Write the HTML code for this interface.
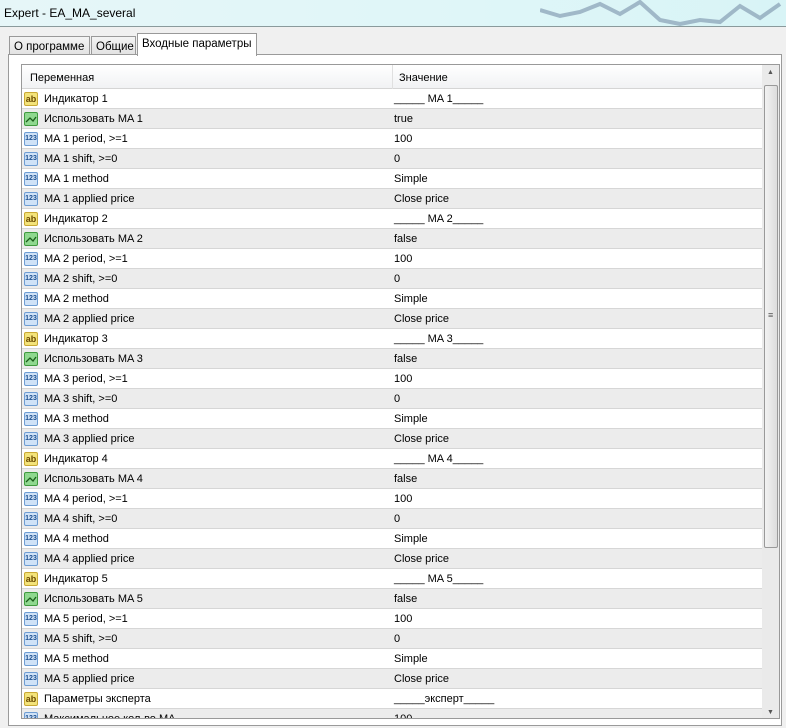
<!DOCTYPE html><html><head><meta charset="utf-8"><style>
*{margin:0;padding:0;box-sizing:border-box}
body{width:786px;height:728px;overflow:hidden;background:#f0f0f0;font-family:"Liberation Sans",sans-serif;font-size:11px;color:#000;position:relative}
.title{position:absolute;left:0;top:0;width:786px;height:27px;background:linear-gradient(90deg,#e6f6f8,#dff6f8 60%,#d8f4f6);border-bottom:1px solid #8a9a9c}
.title span{position:absolute;left:4px;top:6px;font-size:12px}
.tab{position:absolute;top:36px;height:19px;border:1px solid #999;border-bottom:none;background:linear-gradient(#f4f4f4,#e2e2e2);font-size:11.5px;padding:4px 0 0 4px;white-space:nowrap;overflow:hidden}
.panel{position:absolute;left:8px;top:54px;width:774px;height:672px;border:1px solid #9a9a9a;background:#fff}
.grid{position:absolute;left:21px;top:64px;width:759px;height:655px;border:1px solid #999;background:#fff;overflow:hidden}
.hdr{position:absolute;left:0;top:0;width:740px;height:24px;background:linear-gradient(#fff,#f1f2f4);border-bottom:1px solid #d5d5d5}
.hdr span{position:absolute;top:7px}
.row{position:absolute;left:0;width:740px;height:20px;border-bottom:1px solid #d6d6d6;white-space:nowrap}
.row.g{background:#ececec}
.ic{position:absolute;left:2px;top:3px;width:14px;height:14px;border-radius:2px;font-size:7px;line-height:12px;text-align:center;font-weight:bold}
.ab{background:#f3e37a;border:1px solid #c9a935;color:#6a4a00;font-size:9px}
.bo{background:#8fd88f;border:1px solid #3f9a3f}
.nu{background:#cfe2f7;border:1px solid #6e9dd3;color:#1d4f8f}
.n{position:absolute;left:22px;top:4px}
.v{position:absolute;left:372px;top:4px}
.sep{position:absolute;left:370px;top:0;width:1px;height:24px;background:#e0e0e0}
.sb{position:absolute;left:740px;top:0;width:17px;height:653px;background:#eaeaea}
.thumb{position:absolute;left:742px;top:20px;width:14px;height:463px;border:1px solid #999;border-radius:2px;background:linear-gradient(90deg,#f2f2f2,#dcdcdc)}
</style></head><body>
<div class="title"><span>Expert - EA_MA_several</span><svg style="position:absolute;left:540px;top:0" width="246" height="26"><path d="M0 10 L20 16 L40 12 L60 4 L80 14 L100 2 L120 20 L140 24 L160 20 L180 22 L200 6 L220 18 L240 4" stroke="#7890a8" stroke-width="4" fill="none" opacity=".6"/></svg></div>
<div class="tab" style="left:9px;width:81px">О программе</div>
<div class="tab" style="left:91px;width:45px">Общие</div>
<div class="panel"></div>
<div class="tab" style="left:137px;top:33px;width:120px;height:23px;background:#fff;padding-top:4px;border-color:#999">Входные параметры</div>
<div class="grid">
<div class="hdr"><span style="left:8px">Переменная</span><div class="sep"></div><span style="left:377px">Значение</span></div>
<div id="rows"></div>
<div class="sb"><span style="position:absolute;left:5px;top:4px;font-size:7px;color:#555">▲</span><span style="position:absolute;left:5px;bottom:2px;font-size:7px;color:#555">▼</span></div>
<div class="thumb"><span style="position:absolute;left:3px;top:224px;font-size:9px;color:#555">≡</span></div>
</div>
<script>
var d=[];
for(var i=1;i<=5;i++){d.push(['ab','Индикатор '+i,'_____ MA '+i+'_____'],['bo','Использовать MA '+i,i==1?'true':'false'],['nu','MA '+i+' period, >=1','100'],['nu','MA '+i+' shift, >=0','0'],['nu','MA '+i+' method','Simple'],['nu','MA '+i+' applied price','Close price']);}
d.push(['ab','Параметры эксперта','_____эксперт_____'],['nu','Максимальное кол-во MA','100']);
var h='';d.forEach(function(r,k){var t={ab:'ab',bo:'',nu:'123'}[r[0]];
h+='<div class="row'+(k%2?' g':'')+'" style="top:'+(24+k*20)+'px"><div class="ic '+r[0]+'">'+(r[0]=='bo'?'<svg width="12" height="12" style="margin-top:0"><path d="M1 9 L5 5 L8 8 L11 4" stroke="#1b5e1b" stroke-width="1.3" fill="none"/></svg>':t)+'</div><span class="n">'+r[1]+'</span><span class="v">'+r[2]+'</span></div>';});
document.getElementById('rows').innerHTML=h;
</script>
</body></html>
